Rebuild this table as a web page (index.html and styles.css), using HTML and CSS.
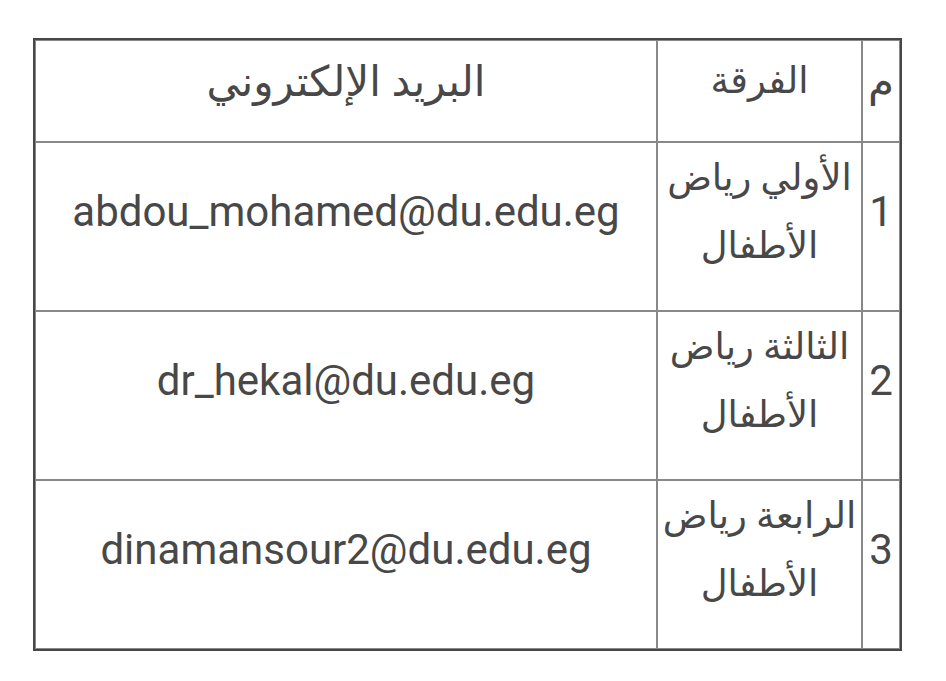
FILE: index.html
```html
<!DOCTYPE html>
<html lang="ar" dir="rtl">
<head>
<meta charset="utf-8">
<link rel="stylesheet" href="styles.css">
</head>
<body>
<table class="grid">
  <colgroup>
    <col class="c-num">
    <col class="c-year">
    <col class="c-mail">
  </colgroup>
  <tr class="head">
    <td class="num">م</td>
    <td class="year">الفرقة</td>
    <td class="mail">البريد الإلكتروني</td>
  </tr>
  <tr class="row">
    <td class="num">1</td>
    <td class="year">الأولي رياض الأطفال</td>
    <td class="mail">abdou_mohamed@du.edu.eg</td>
  </tr>
  <tr class="row">
    <td class="num">2</td>
    <td class="year">الثالثة رياض الأطفال</td>
    <td class="mail">dr_hekal@du.edu.eg</td>
  </tr>
  <tr class="row">
    <td class="num">3</td>
    <td class="year">الرابعة رياض الأطفال</td>
    <td class="mail">dinamansour2@du.edu.eg</td>
  </tr>
</table>
</body>
</html>
```
FILE: styles.css
```css
html, body {
  margin: 0;
  background: #fff;
}
body {
  padding: 38px 44px 0 33px;
  font-family: Roboto, "DejaVu Sans", sans-serif;
  color: #484848;
}
.grid {
  border-collapse: separate;
  border-spacing: 0;
  border: 2px solid #474747;
  width: 869px;
  font-size: 42px;
}
.c-num { width: 38px; }
.c-year { width: 205px; }
.grid td {
  border: 1px solid #888;
  text-align: center;
  vertical-align: middle;
  padding: 0 2px;
  box-sizing: border-box;
}
.grid td.num {
  padding-left: 1px;
  padding-right: 1px;
}
.head td {
  height: 102px;
  padding-bottom: 20px;
}
.row td {
  height: 169px;
  padding-bottom: 30px;
}
.year {
  font-size: 37px;
  line-height: 68px;
}
.head .num { font-size: 42px; }
```
